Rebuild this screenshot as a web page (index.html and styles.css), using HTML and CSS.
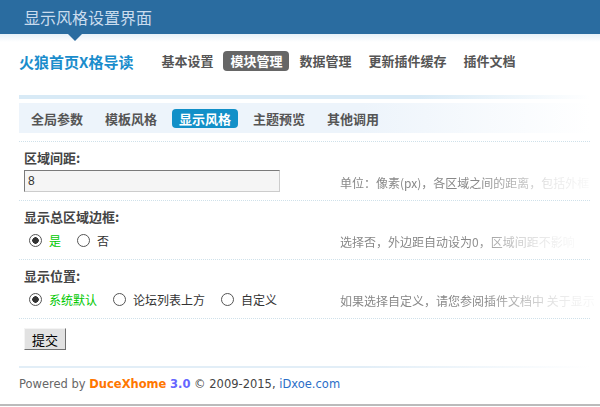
FILE: index.html
```html
<!DOCTYPE html>
<html lang="zh-CN">
<head>
  <meta charset="UTF-8" />
  <title>显示风格设置界面</title>
  <link rel="stylesheet" href="styles.css">
</head>
<body>

  <!-- Header -->
  <div class="header">
    <span class="header-title">显示风格设置界面</span>
  </div>
  <div class="header-shade"></div>

  <!-- Top navigation -->
  <div class="topnav">
    <span class="brand">火狼首页X格导读</span>
    <a href="#">基本设置</a>
    <a href="#" class="current">模块管理</a>
    <a href="#">数据管理</a>
    <a href="#">更新插件缓存</a>
    <a href="#">插件文档</a>
  </div>

  <div class="main">
    <div class="tab-line"></div>
    <div class="tabbar">
      <a href="#">全局参数</a>
      <a href="#">模板风格</a>
      <a href="#" class="active">显示风格</a>
      <a href="#">主题预览</a>
      <a href="#">其他调用</a>
    </div>

    <form class="settings">
      <div class="row">
        <div class="row-title">区域间距:</div>
        <div class="row-body">
          <div class="field"><input type="text" class="txt" value="8"></div>
          <div class="hint">单位：像素(px)，各区域之间的距离，包括外框</div>
        </div>
      </div>

      <div class="row">
        <div class="row-title">显示总区域边框:</div>
        <div class="row-body">
          <div class="field">
            <label class="opt on"><input type="radio" name="border" checked>是</label>
            <label class="opt"><input type="radio" name="border">否</label>
          </div>
          <div class="hint">选择否，外边距自动设为0，区域间距不影响</div>
        </div>
      </div>

      <div class="row">
        <div class="row-title">显示位置:</div>
        <div class="row-body">
          <div class="field">
            <label class="opt on"><input type="radio" name="pos" checked>系统默认</label>
            <label class="opt"><input type="radio" name="pos">论坛列表上方</label>
            <label class="opt"><input type="radio" name="pos">自定义</label>
          </div>
          <div class="hint">如果选择自定义，请您参阅插件文档中 关于显示</div>
        </div>
      </div>

      <div class="submit-row">
        <button type="submit" class="btn">提交</button>
      </div>
    </form>

    <div class="footer-line"></div>
    <div class="footer">
      Powered by <span class="prod">DuceXhome</span> <span class="ver">3.0</span>
      <span class="copy">&copy; 2009-2015,</span> <a href="#">iDxoe.com</a>
    </div>
  </div>

  <div class="bottom-line"></div>

</body>
</html>
```

FILE: styles.css
```css
body {
  margin: 0;
  font-family: "Noto Sans CJK SC", "Liberation Sans", sans-serif;
  font-size: 12px;
  color: #333;
  background: #fff;
  overflow: hidden;
}
a {
  text-decoration: none;
}

/* header */
.header {
  position: relative;
  height: 34px;
  background: #2a6ca0;
  padding-left: 24px;
}
.header-title {
  line-height: 34px;
  font-size: 16px;
  color: #cadcee;
}
.header::after {
  content: "";
  position: absolute;
  left: 68px;
  bottom: -7px;
  border-left: 7px solid transparent;
  border-right: 7px solid transparent;
  border-top: 7px solid #2a6ca0;
}
.header-shade {
  height: 8px;
  background: linear-gradient(#e6f0f8, #fff);
}

/* top nav */
.topnav {
  display: flex;
  align-items: center;
  height: 20px;
  padding: 9px 0 0 19px;
  margin-bottom: 24px;
}
.brand {
  font-size: 15px;
  font-weight: bold;
  color: #1a8dcc;
  margin-right: 21px;
}
.topnav a {
  font-size: 13px;
  font-weight: bold;
  color: #555;
  line-height: 20px;
  padding: 0 7px;
  margin-right: 3px;
  border-radius: 4px;
}
.topnav a.current {
  background: #666;
  color: #fff;
}

/* main area */
.main {
  margin: 0 10px 0 19px;
}
.tab-line {
  height: 4px;
  background: linear-gradient(to right, #d8eaf6 70%, #fff);
  margin-bottom: 4px;
}
.tabbar {
  display: flex;
  align-items: center;
  height: 30px;
  padding-left: 5px;
  background: linear-gradient(to right, #edf4fb 60%, #fff);
  margin-bottom: 8px;
}
.tabbar a {
  font-size: 13px;
  font-weight: bold;
  color: #555;
  line-height: 19px;
  padding: 0 7px;
  margin-right: 8px;
  border-radius: 4px;
}
.tabbar a.active {
  background: #1290c8;
  color: #fff;
}

/* form rows */
.row {
  border-top: 1px dotted #cfe1ea;
  padding: 7px 0 8px 5px;
}
.row-title {
  font-size: 13px;
  font-weight: bold;
  color: #444;
  line-height: 18px;
}
.row-body {
  display: flex;
  align-items: center;
  height: 22px;
  margin-top: 3px;
}
.field {
  width: 316px;
  display: flex;
  align-items: center;
  flex-shrink: 0;
}
.txt {
  box-sizing: border-box;
  width: 256px;
  height: 22px;
  padding: 0 3px;
  background: #f5f5f5;
  border: 1px solid;
  border-color: #7a7a7a #ccc #ccc #7a7a7a;
  font-family: "Liberation Sans", Arial, sans-serif;
  font-size: 12px;
  color: #333;
  outline: none;
}
.hint {
  white-space: nowrap;
  color: #888;
  padding-top: 2px;
  -webkit-mask-image: linear-gradient(to right, #000 55%, rgba(0,0,0,0.2) 85%, rgba(0,0,0,0.05));
  mask-image: linear-gradient(to right, #000 55%, rgba(0,0,0,0.2) 85%, rgba(0,0,0,0.05));
}

.opt {
  display: flex;
  align-items: center;
  margin-right: 16px;
  color: #333;
}
.opt:first-child {
  margin-left: 5px;
}
.opt.on {
  color: #00c800;
}
.opt input {
  -webkit-appearance: none;
  appearance: none;
  box-sizing: border-box;
  width: 13px;
  height: 13px;
  margin: 0 7px 0 0;
  border: 1px solid #555;
  border-radius: 50%;
  background: #fff;
}
.opt input:checked {
  background: radial-gradient(circle, #333 0 3px, #fff 3.5px);
}

.submit-row {
  border-top: 1px dotted #cfe1ea;
  padding: 9px 0 16px 5px;
}
.btn {
  height: 22px;
  padding: 0 7px;
  background: #e2e2e2;
  border: 1px solid;
  border-color: #f4f4f4 #707070 #707070 #f4f4f4;
  font-family: "Noto Sans CJK SC", sans-serif;
  font-size: 13px;
  color: #000;
}

/* footer */
.footer-line {
  height: 2px;
  background: linear-gradient(to right, #e2eef7 60%, #fff);
}
.footer {
  font-family: "DejaVu Sans", Verdana, sans-serif;
  font-size: 11.5px;
  color: #666;
  line-height: 16px;
  padding: 8px 0 12px;
}
.footer .prod {
  color: #ff7700;
  font-weight: bold;
}
.footer .ver {
  color: #6666ff;
  font-weight: bold;
}
.footer .copy {
  color: #444;
}
.footer a {
  color: #2a6ec8;
}
.bottom-line {
  height: 2px;
  background: #bbb;
}
```
